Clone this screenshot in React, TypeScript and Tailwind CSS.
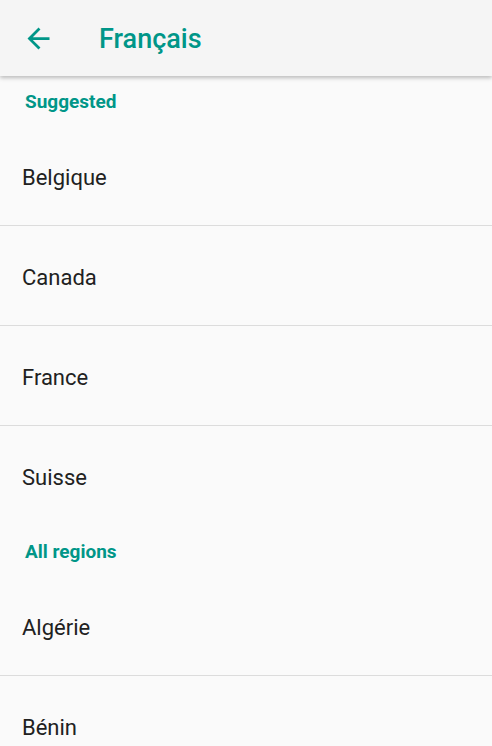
import React from "react";

const suggested = ["Belgique", "Canada", "France", "Suisse"];
const allRegions = ["Algérie", "Bénin"];

function SectionHeader({ title }: { title: string }) {
  return (
    <div className="h-[50px] flex items-center pl-[25px] pt-[2px] text-[19px] font-bold text-[#009688]">
      {title}
    </div>
  );
}

function RegionList({ items }: { items: string[] }) {
  return (
    <div>
      {items.map((name, i) => (
        <div
          key={name}
          className={
            "h-[100px] flex items-center pl-[22px] pt-[3px] text-[22px] text-[#212121] " +
            (i < items.length - 1 ? "border-b border-[#dcdcdc]" : "")
          }
        >
          {name}
        </div>
      ))}
    </div>
  );
}

export default function App() {
  return (
    <div
      className="w-[492px] h-[746px] overflow-hidden bg-[#fafafa]"
      style={{ fontFamily: "Roboto, 'Noto Sans', sans-serif" }}
    >
      <header className="relative z-10 h-[76px] flex items-center bg-[#f5f5f5] shadow-[0_2px_4px_rgba(0,0,0,0.25)]">
        <button className="ml-[21px] w-[34px] h-[34px] flex items-center justify-center text-[#009688]">
          <svg viewBox="0 0 24 24" width="33" height="33" fill="currentColor">
            <path d="M20 11H7.83l5.59-5.59L12 4l-8 8 8 8 1.41-1.41L7.83 13H20v-2z" />
          </svg>
        </button>
        <h1 className="ml-[44px] pt-[2px] text-[27px] font-medium text-[#009688]">Français</h1>
      </header>
      <SectionHeader title="Suggested" />
      <RegionList items={suggested} />
      <SectionHeader title="All regions" />
      <RegionList items={allRegions} />
    </div>
  );
}
